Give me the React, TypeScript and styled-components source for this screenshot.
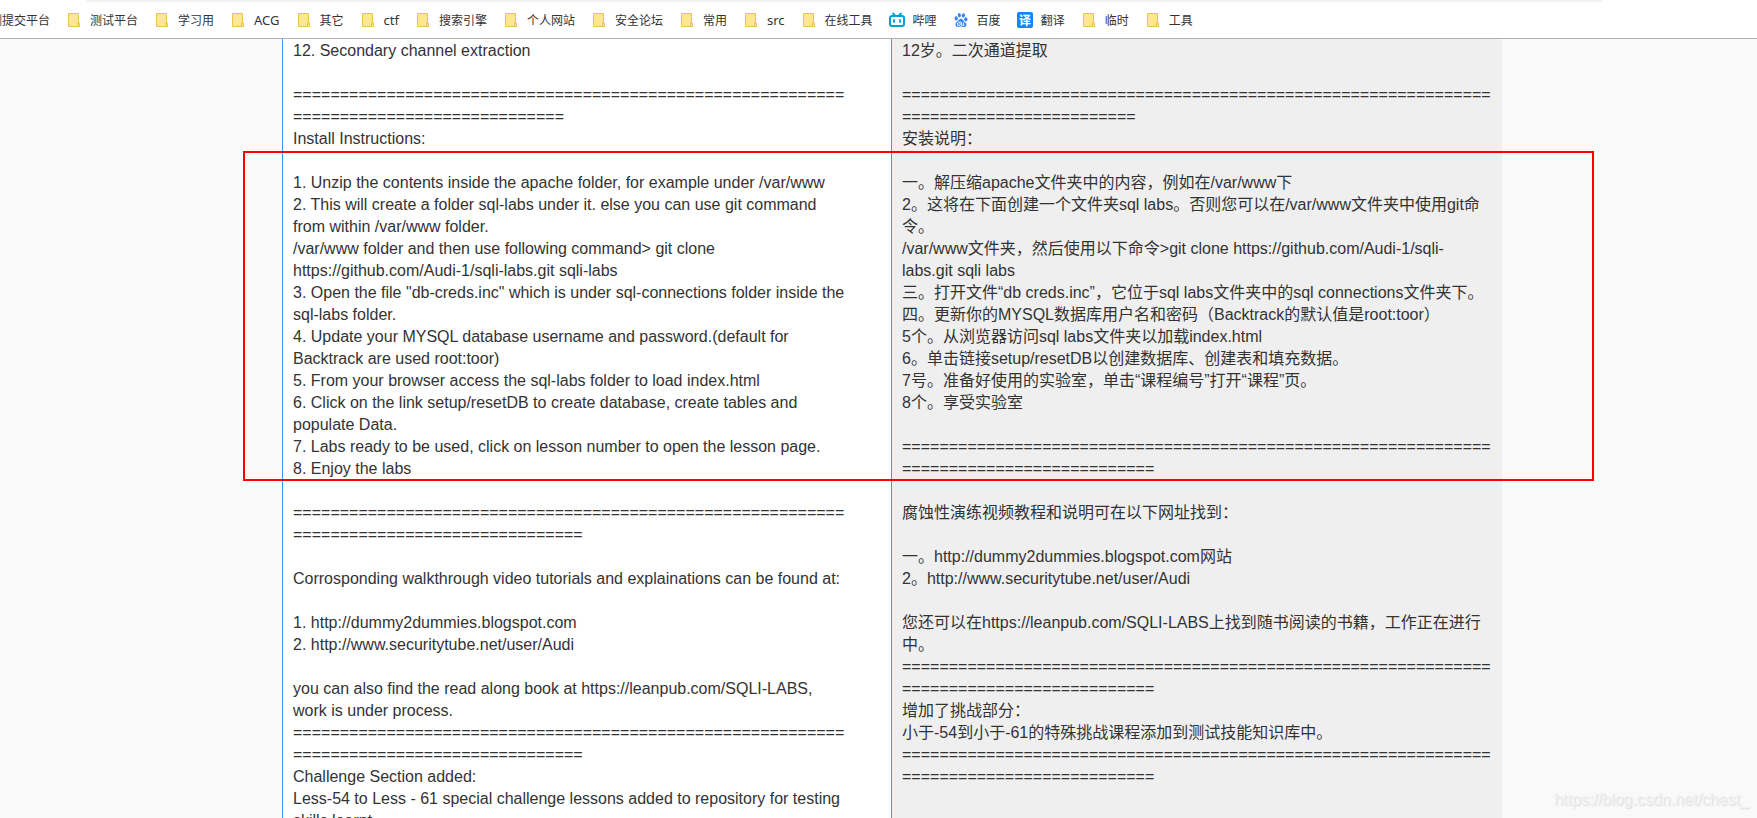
import React from "react";
import styled, { createGlobalStyle } from "styled-components";
import { SiBaidu } from "react-icons/si";

const GlobalStyle = createGlobalStyle`
  * { box-sizing: border-box; }
  body {
    margin: 0;
    background: #f9f9f9;
    color: #333;
    font-family: "Liberation Sans", "Noto Sans CJK SC", sans-serif;
    text-spacing-trim: space-all;
  }
`;

const Screen = styled.div`
  position: relative;
  display: flex;
  flex-direction: column;
  height: 100vh;
  overflow: hidden;
`;

const Toolbar = styled.header`
  flex: none;
  background: #fff;
  border-bottom: 1px solid #b0b0b0;
`;

const AddressEdge = styled.div`
  height: 2px;
  margin: 0 154px 0 86px;
  background: #f2f2f2;
  border-radius: 0 0 4px 4px;
`;

const Bookmarks = styled.nav`
  display: flex;
  align-items: center;
  gap: 16px;
  height: 36px;
  margin-left: -10px;
  overflow: hidden;
  white-space: nowrap;
`;

const Bookmark = styled.a`
  display: flex;
  flex: none;
  align-items: center;
  gap: 8px;
  color: #333;
  font-family: "Noto Sans", "Noto Sans CJK SC", sans-serif;
  line-height: 20px;
  text-decoration: none;

  svg { flex: none; }
`;

const Label = styled.span<{ $latin?: boolean }>`
  padding-top: ${({ $latin }) => ($latin ? 0 : 2)}px;
  font-size: ${({ $latin }) => ($latin ? 13 : 12)}px;
`;

const Content = styled.main`
  flex: 1;
  display: flex;
  justify-content: center;
  min-height: 0;
  padding-left: 27px;
`;

const Translation = styled.div`
  position: relative;
  display: grid;
  grid-template-columns: 609fr 611fr;
  width: 100%;
  max-width: 1220px;
`;

const Panel = styled.section<{ $result?: boolean }>`
  min-height: 0;
  padding: 1px ${({ $result }) => ($result ? 10 : 42)}px 0 10px;
  border-left: 1px solid #4395ff;
  background: ${({ $result }) => ($result ? "#efefef" : "#fff")};
  font-size: 16px;
  line-height: 22px;
  overflow-wrap: anywhere;
`;

const Line = styled.p`
  min-height: 22px;
  margin: 0;
`;

const Highlight = styled.div`
  position: absolute;
  top: 112px;
  left: -39px;
  right: -92px;
  height: 330px;
  border: 2px solid #f00;
  pointer-events: none;
`;

const Watermark = styled.span`
  position: absolute;
  right: 8px;
  bottom: 7px;
  color: #f1f1f1;
  font-size: 16px;
  line-height: 22px;
  text-shadow: 1px 1px 1px #dcdcdc;
`;

const FolderIcon = () => (
  <svg width="16" height="16" viewBox="0 0 16 16" aria-hidden="true">
    <path d="M2.5 1.5h10v9.5l1 0v3.5h-11z" fill="#ffe694" stroke="#e8c64c" />
    <path d="M11.5 14.5v-3.5h2v3.5z" fill="#ffe694" stroke="#e8c64c" />
  </svg>
);

const BilibiliIcon = () => (
  <svg width="16" height="16" viewBox="0 0 16 16" aria-hidden="true" fill="none" stroke="#00a1d6" strokeWidth="2" strokeLinecap="round">
    <rect x="1" y="4" width="14" height="10" rx="2" />
    <path d="M4 1.5l2 2M12 1.5l-2 2M5 8v2M11 8v2" strokeWidth="1.8" />
  </svg>
);

const BaiduIcon = () => (
  <svg width="16" height="16" viewBox="0 0 16 16" aria-hidden="true">
    <SiBaidu x={1} y={1} size={14} color="#3385ff" />
  </svg>
);

const TranslateIcon = () => (
  <svg width="16" height="16" viewBox="0 0 16 16" aria-hidden="true">
    <rect width="16" height="16" rx="2" fill="#1487f8" />
    <text x="8" y="12.5" textAnchor="middle" fontSize="12" fontWeight="700" fill="#fff" fontFamily="Noto Sans CJK SC, sans-serif">译</text>
  </svg>
);

type BookmarkItem = { label: string; icon?: React.ComponentType | null; latin?: boolean };

const bookmarks: BookmarkItem[] = [
  { label: "测提交平台", icon: null },
  { label: "测试平台" },
  { label: "学习用" },
  { label: "ACG", latin: true },
  { label: "其它" },
  { label: "ctf", latin: true },
  { label: "搜索引擎" },
  { label: "个人网站" },
  { label: "安全论坛" },
  { label: "常用" },
  { label: "src", latin: true },
  { label: "在线工具" },
  { label: "哔哩", icon: BilibiliIcon },
  { label: "百度", icon: BaiduIcon },
  { label: "翻译", icon: TranslateIcon },
  { label: "临时" },
  { label: "工具" },
];

const rule = (length: number) => "=".repeat(length);

const source = [
  "12. Secondary channel extraction",
  "",
  rule(88),
  "Install Instructions:",
  "",
  "1. Unzip the contents inside the apache folder, for example under /var/www",
  "2. This will create a folder sql-labs under it. else you can use git command from within /var/www folder.",
  "/var/www folder and then use following command> git clone https://github.com/Audi-1/sqli-labs.git sqli-labs",
  "3. Open the file \"db-creds.inc\" which is under sql-connections folder inside the sql-labs folder.",
  "4. Update your MYSQL database username and password.(default for Backtrack are used root:toor)",
  "5. From your browser access the sql-labs folder to load index.html",
  "6. Click on the link setup/resetDB to create database, create tables and populate Data.",
  "7. Labs ready to be used, click on lesson number to open the lesson page.",
  "8. Enjoy the labs",
  "",
  rule(90),
  "",
  "Corrosponding walkthrough video tutorials and explainations can be found at:",
  "",
  "1. http://dummy2dummies.blogspot.com",
  "2. http://www.securitytube.net/user/Audi",
  "",
  "you can also find the read along book at https://leanpub.com/SQLI-LABS, work is under process.",
  rule(90),
  "Challenge Section added:",
  "Less-54 to Less - 61 special challenge lessons added to repository for testing skills learnt.",
];

const result = [
  "12岁。二次通道提取",
  "",
  rule(88),
  "安装说明：",
  "",
  "一。解压缩apache文件夹中的内容，例如在/var/www下",
  "2。这将在下面创建一个文件夹sql labs。否则您可以在/var/www文件夹中使用git命令。",
  "/var/www文件夹，然后使用以下命令>git clone https://github.com/Audi-1/sqli-labs.git sqli labs",
  "三。打开文件“db creds.inc”，它位于sql labs文件夹中的sql connections文件夹下。",
  "四。更新你的MYSQL数据库用户名和密码（Backtrack的默认值是root:toor）",
  "5个。从浏览器访问sql labs文件夹以加载index.html",
  "6。单击链接setup/resetDB以创建数据库、创建表和填充数据。",
  "7号。准备好使用的实验室，单击“课程编号”打开“课程”页。",
  "8个。享受实验室",
  "",
  rule(90),
  "",
  "腐蚀性演练视频教程和说明可在以下网址找到：",
  "",
  "一。http://dummy2dummies.blogspot.com网站",
  "2。http://www.securitytube.net/user/Audi",
  "",
  "您还可以在https://leanpub.com/SQLI-LABS上找到随书阅读的书籍，工作正在进行中。",
  rule(90),
  "增加了挑战部分：",
  "小于-54到小于-61的特殊挑战课程添加到测试技能知识库中。",
  rule(90),
];

export default function App() {
  return (
    <Screen>
      <GlobalStyle />
      <Toolbar>
        <AddressEdge />
        <Bookmarks aria-label="Bookmarks">
          {bookmarks.map(({ label, icon: Icon = FolderIcon, latin }) => (
            <Bookmark key={label} href="#">
              {Icon && <Icon />}
              <Label $latin={latin}>{label}</Label>
            </Bookmark>
          ))}
        </Bookmarks>
      </Toolbar>
      <Content>
        <Translation>
          <Panel lang="en">
            {source.map((line, i) => <Line key={i}>{line}</Line>)}
          </Panel>
          <Panel $result lang="zh-CN">
            {result.map((line, i) => <Line key={i}>{line}</Line>)}
          </Panel>
          <Highlight />
        </Translation>
      </Content>
      <Watermark>https://blog.csdn.net/chest_</Watermark>
    </Screen>
  );
}
